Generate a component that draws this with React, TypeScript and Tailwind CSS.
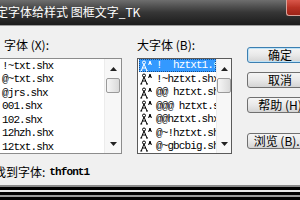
import React from 'react';

const cjk = { fontFamily: '"Noto Sans CJK SC", "Noto Sans", sans-serif' };
const mono = { fontFamily: '"Liberation Mono", "DejaVu Sans Mono", monospace' };

const leftItems = ['!~txt.shx', '@~txt.shx', '@jrs.shx', '001.shx', '102.shx', '12hzh.shx', '12txt.shx'];
const bigItems = ['!  hztxt1.shx', '!~hztxt.shx', '@@ hztxt.shx', '@@@ hztxt.shx', '@@hztxt.shx', '@~!hztxt.shx', '@~gbcbig.shx'];

const ShxIcon: React.FC = () => (
  <svg width="13" height="12" viewBox="0 0 13 12" fill="none" stroke="currentColor" strokeWidth="1" className="shrink-0">
    <circle cx="4" cy="2.5" r="1.5" />
    <path d="M4 4 L1.2 11 M4 4 L7 11 M2.2 8 H6 M0.3 11 H2.2 M6 11 H8" />
    <path d="M8.6 5 L10 1 L11.4 5 M9 3.6 H11" />
  </svg>
);

const ScrollBar: React.FC<{ width: string }> = ({ width }) => (
  <div className={`${width} h-full flex flex-col items-center bg-[#f7f7f7] border-l border-[#ececec]`}>
    <div className="h-[19px] w-full flex items-center justify-center">
      <svg width="7" height="4" viewBox="0 0 7 4"><path d="M0 4 L3.5 0 L7 4 Z" fill="#222" /></svg>
    </div>
    <div className="h-[15px] w-[14px] rounded-[2px] border border-[#9a9a9a] bg-linear-to-r from-[#f6f6f6] to-[#dadada]" />
    <div className="flex-1" />
    <div className="h-[19px] w-full flex items-center justify-center">
      <svg width="7" height="4" viewBox="0 0 7 4"><path d="M0 0 L3.5 4 L7 0 Z" fill="#222" /></svg>
    </div>
  </div>
);

const DlgButton: React.FC<{ label: string; primary?: boolean; className?: string }> = ({ label, primary, className = '' }) => (
  <div
    className={`h-[16px] w-[66px] shrink-0 rounded-[3px] border flex items-center justify-center text-[12px] leading-none text-black whitespace-nowrap bg-linear-to-b from-[#f5f5f5] via-[#e9e9e9] to-[#d4d4d4] ${
      primary ? 'border-[#3c7fb1] shadow-[inset_0_0_0_1px_#bfe3f7]' : 'border-[#707070]'
    } ${className}`}
    style={cjk}
  >
    {label}
  </div>
);

export default function App() {
  return (
    <div className="w-[300px] h-[200px] overflow-hidden flex flex-col bg-[#f0f0f0]">
      {/* title bar */}
      <div className="h-[26px] shrink-0 flex items-start bg-linear-to-b from-[#6e6e6e] via-[#363636] to-[#1c1c1c] border-b border-[#9c9c9c]">
        <span className="-ml-[4px] mt-[5px] text-[12px] leading-[14px] text-white whitespace-nowrap" style={cjk}>
          定字体给样式 图框文字_TK
        </span>
        <div className="ml-auto w-[14px] h-[16px] rounded-bl-[3px] border-l border-b border-[#d9a39a] bg-linear-to-b from-[#d9574a] via-[#b83224] to-[#9c2418]" />
      </div>

      <div className="h-[159px] shrink-0 flex flex-col">
        <div className="flex items-start">
          {/* font list */}
          <div className="-ml-px w-[123px] shrink-0">
            <div className="mt-[13px] h-[12px] pl-[5px] text-[12px] leading-[12px] text-black whitespace-nowrap" style={cjk}>
              字体 (X):
            </div>
            <div className="mt-[7px] h-[96px] border border-[#8c8c8c] bg-white flex">
              <div className="flex-1 flex flex-col overflow-hidden">
                {leftItems.map((item) => (
                  <div key={item} className="h-[13.5px] pl-[2px] flex items-center text-[11px] tracking-[-0.9px] text-black whitespace-pre" style={mono}>
                    {item}
                  </div>
                ))}
              </div>
              <ScrollBar width="w-[17px]" />
            </div>
          </div>

          {/* big font list */}
          <div className="ml-[15px] w-[95px] shrink-0">
            <div className="mt-[13px] h-[12px] text-[12px] leading-[12px] text-black whitespace-nowrap" style={cjk}>
              大字体 (B):
            </div>
            <div className="mt-[7px] h-[96px] border border-[#5a5a5a] bg-white flex">
              <div className="flex-1 flex flex-col overflow-hidden">
                {bigItems.map((item, i) => (
                  <div
                    key={item}
                    className={`h-[13.5px] ml-px pl-[1px] flex items-center gap-[3px] text-[11px] tracking-[-0.9px] whitespace-pre overflow-hidden ${
                      i === 0 ? 'bg-[#3399ff] text-white outline-1 outline-dotted outline-[#1a4f8a] -outline-offset-1' : 'text-black'
                    }`}
                    style={mono}
                  >
                    <ShxIcon />
                    <span>{item}</span>
                  </div>
                ))}
              </div>
              <ScrollBar width="w-[15px]" />
            </div>
          </div>

          {/* buttons */}
          <div className="ml-[15px] mt-[21px] flex flex-col gap-[9px]">
            <DlgButton label="确定" primary />
            <DlgButton label="取消" />
            <DlgButton label="帮助 (H)" />
            <DlgButton label="浏览 (B)..." className="mt-[11px]" />
          </div>
        </div>

        <div className="mt-[11px] -ml-[6px] h-[14px] flex items-center whitespace-nowrap text-black">
          <span className="text-[12px] leading-[14px]" style={cjk}>找到字体:</span>
          <span className="ml-[4px] text-[11px] tracking-[-0.9px] font-bold" style={mono}>thfont1</span>
        </div>
      </div>

      {/* bottom frame edge */}
      <div className="flex-1 flex flex-col">
        <div className="h-[2px] bg-[#8a8a8a]" />
        <div className="h-[3px] bg-black" />
        <div className="h-[2px] bg-[#e6e6e6]" />
        <div className="h-[3px] bg-black" />
        <div className="h-[2px] bg-[#9a9a9a]" />
        <div className="flex-1 bg-black" />
      </div>
    </div>
  );
}
